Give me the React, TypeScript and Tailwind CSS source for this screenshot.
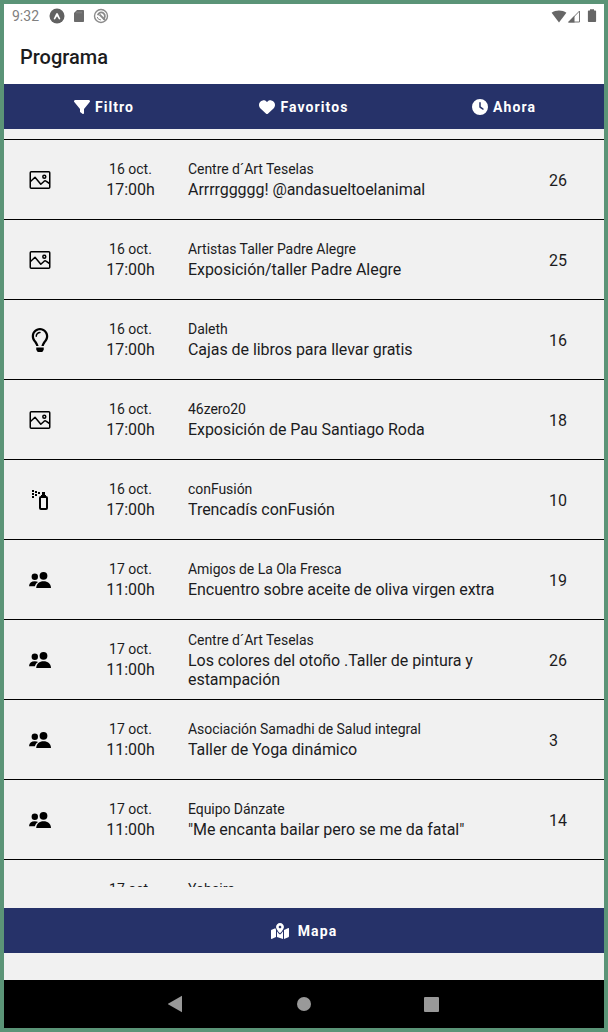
import clsx from 'clsx';
import type { ReactNode } from 'react';
import { FaMapMarkedAlt, FaRegLightbulb } from 'react-icons/fa';
import { FaClock, FaFilter, FaHeart } from 'react-icons/fa6';

type Category = 'exhibition' | 'idea' | 'spray' | 'people';

type ProgramEvent = {
  category: Category;
  date: string;
  time: string;
  organizer: string;
  title: string;
  place: number;
};

const EVENTS: ProgramEvent[] = [
  {
    category: 'exhibition',
    date: '16 oct.',
    time: '17:00h',
    organizer: 'Centre d´Art Teselas',
    title: 'Arrrrggggg! @andasueltoelanimal',
    place: 26,
  },
  {
    category: 'exhibition',
    date: '16 oct.',
    time: '17:00h',
    organizer: 'Artistas Taller Padre Alegre',
    title: 'Exposición/taller Padre Alegre',
    place: 25,
  },
  {
    category: 'idea',
    date: '16 oct.',
    time: '17:00h',
    organizer: 'Daleth',
    title: 'Cajas de libros para llevar gratis',
    place: 16,
  },
  {
    category: 'exhibition',
    date: '16 oct.',
    time: '17:00h',
    organizer: '46zero20',
    title: 'Exposición de Pau Santiago Roda',
    place: 18,
  },
  {
    category: 'spray',
    date: '16 oct.',
    time: '17:00h',
    organizer: 'conFusión',
    title: 'Trencadís conFusión',
    place: 10,
  },
  {
    category: 'people',
    date: '17 oct.',
    time: '11:00h',
    organizer: 'Amigos de La Ola Fresca',
    title: 'Encuentro sobre aceite de oliva virgen extra',
    place: 19,
  },
  {
    category: 'people',
    date: '17 oct.',
    time: '11:00h',
    organizer: 'Centre d´Art Teselas',
    title: 'Los colores del otoño .Taller de pintura y estampación',
    place: 26,
  },
  {
    category: 'people',
    date: '17 oct.',
    time: '11:00h',
    organizer: 'Asociación Samadhi de Salud integral',
    title: 'Taller de Yoga dinámico',
    place: 3,
  },
  {
    category: 'people',
    date: '17 oct.',
    time: '11:00h',
    organizer: 'Equipo Dánzate',
    title: '"Me encanta bailar pero se me da fatal"',
    place: 14,
  },
];

function PictureIcon() {
  return (
    <svg
      viewBox="0 0 24 24"
      className="size-6"
      fill="none"
      stroke="currentColor"
      strokeWidth="1.5"
      strokeLinejoin="round"
    >
      <rect x="2.250" y="3.750" width="19.500" height="16.500" rx="1" />
      <path d="m2.500 13.500 4.500-4.300 5.800 7 3.400-3c.6-.5 1.200-.5 1.800 0l3.500 2.300" />
      <circle cx="16.300" cy="8.800" r="1.500" />
    </svg>
  );
}

function SprayIcon() {
  return (
    <svg viewBox="0 0 24 24" className="size-6" fill="currentColor">
      <path d="M10 4h2v2h-2V4M7 3h2v2H7V3M7 6h2v2H7V6M6 8v2H4V8h2M6 5v2H4V5h2M6 2v2H4V2h2M13 22a2 2 0 0 1-2-2V10a2 2 0 0 1 2-2V7h1V4h3v3h1v1a2 2 0 0 1 2 2v10a2 2 0 0 1-2 2h-5M13 10v10h5V10h-5Z" />
    </svg>
  );
}

function PeopleIcon() {
  return (
    <svg viewBox="0 0 24 24" className="size-6" fill="currentColor">
      <circle cx="6.800" cy="8.700" r="3.200" />
      <circle cx="15.500" cy="7.800" r="3.900" />
      <path d="M8.200 20c.2-4.300 3.200-6.700 7.400-6.700S22.800 15.700 23 20z" />
      <path d="M1 18.300c.2-3.300 2.400-5 5.800-5 1.300 0 2.400.3 3.300.8-1.600 1-2.700 2.400-3.200 4.200z" />
    </svg>
  );
}

const CATEGORY_ICONS: Record<Category, ReactNode> = {
  exhibition: <PictureIcon />,
  idea: <FaRegLightbulb size={24} />,
  spray: <SprayIcon />,
  people: <PeopleIcon />,
};

function StatusBar() {
  return (
    <div className="flex h-6 items-center justify-between pl-2 pr-[7px] text-[#6b6b6b]">
      <div className="flex items-center">
        <span className="w-[37px] text-sm leading-6 text-[#808080]">9:32</span>
        <svg viewBox="0 0 16 16" className="size-4">
          <circle cx="8" cy="8" r="7.500" fill="#616161" />
          <path
            d="M4.600 11 7.300 5.200h1.400L11.400 11l-1.300.5L8 8.200l-2.100 3.300z"
            fill="#fff"
          />
        </svg>
        <svg viewBox="0 0 12 14" className="ml-2 h-3.5 w-3">
          <path
            d="M4 1h6.200a.8.8 0 0 1 .8.800v10.400a.8.8 0 0 1-.8.800H1.800a.8.8 0 0 1-.8-.800V4z"
            fill="#6b6b6b"
          />
          <path d="M4 2.600v1.800M6 2.600v1.800M8 2.600v1.800" stroke="#8d8d8d" />
        </svg>
        <svg viewBox="0 0 16 16" className="ml-2 size-4" fill="none">
          <circle cx="8" cy="8" r="6.500" stroke="#8a8a8a" strokeWidth="1.400" />
          <path
            d="M4.800 7.200A3.600 3.600 0 1 1 10 11.200"
            stroke="#8a8a8a"
            strokeWidth="1.800"
          />
          <path d="m6.500 6.500 5.500 5.500" stroke="#8a8a8a" strokeWidth="1.800" />
          <path d="M4.200 9a4 4 0 0 0 3.800 3" stroke="#8a8a8a" />
        </svg>
      </div>
      <div className="flex items-center">
        <svg viewBox="0 0 16 14" className="h-3.5 w-4">
          <path d="M8 13.400.6 3.800C4.600.6 11.400.6 15.400 3.800z" fill="#666" />
        </svg>
        <svg viewBox="0 0 14 14" className="h-3.5 w-3.5" fill="none">
          <path d="M1.800 13 12.500 2v11z" stroke="#777" />
          <path d="M.8 13.500 7.500 6.800v6.700z" fill="#666" />
        </svg>
        <svg viewBox="0 0 10 14" className="ml-1.5 h-3.5 w-2.5">
          <path
            d="M3 .2h4v1.300h1.300a.8.8 0 0 1 .8.800v10a.8.8 0 0 1-.8.800H1.700a.8.8 0 0 1-.8-.800v-10a.8.8 0 0 1 .8-.800H3z"
            fill="#666"
          />
        </svg>
      </div>
    </div>
  );
}

type ActionProps = {
  icon: ReactNode;
  label: string;
  className?: string;
};

function Action({ icon, label, className }: ActionProps) {
  return (
    <button
      type="button"
      className={clsx(
        'flex h-[45px] flex-1 items-center justify-center text-sm font-bold tracking-[1.1px] text-white',
        className,
      )}
    >
      {icon}
      <span>{label}</span>
    </button>
  );
}

function EventRow({ event }: { event: ProgramEvent }) {
  return (
    <li className="flex h-20 shrink-0 items-center border-b border-black">
      <div className="flex w-[72px] justify-center text-black">
        {CATEGORY_ICONS[event.category]}
      </div>
      <div className="flex w-[109px] flex-col items-center gap-[3px]">
        <span className="text-sm leading-4">{event.date}</span>
        <span className="text-base leading-[19px]">{event.time}</span>
      </div>
      <div className="ml-[3px] flex w-[320px] flex-col gap-[3px] pt-px tracking-[-0.05px]">
        <span className="text-sm leading-4">{event.organizer}</span>
        <span className="text-base leading-[19px]">{event.title}</span>
      </div>
      <span className="ml-[41px] pt-0.5 text-base leading-[19px]">
        {event.place}
      </span>
    </li>
  );
}

export default function App() {
  return (
    <div className="flex h-[1032px] w-[608px] flex-col border-4 border-[#5b9477] bg-[#f1f1f1] font-[Roboto,sans-serif] text-[#1c1c1e]">
      <header className="h-20 shrink-0 bg-white">
        <StatusBar />
        <h1 className="pl-4 pt-[15px] text-xl font-medium leading-7">
          Programa
        </h1>
      </header>

      <nav className="flex shrink-0 bg-[#263269]">
        <Action
          icon={<FaFilter size={16} className="mr-[5px]" />}
          label="Filtro"
        />
        <Action
          icon={<FaHeart size={16} className="mr-[5px]" />}
          label="Favoritos"
        />
        <Action
          icon={<FaClock size={16} className="mr-[5px]" />}
          label="Ahora"
        />
      </nav>

      <ul className="mt-2.5 flex h-[748px] shrink-0 flex-col overflow-hidden border-t border-black">
        {EVENTS.map((event) => (
          <EventRow key={event.title} event={event} />
        ))}
        {/* only the top of the next row peeks in above the map button */}
        <li className="flex h-7 shrink-0 pt-[21px] text-sm leading-4">
          <span className="ml-[72px] w-[109px] text-center">17 oct.</span>
          <span className="ml-[3px]">Yohaira</span>
        </li>
      </ul>

      <div className="mt-[21px] flex shrink-0 bg-[#263269]">
        <Action
          icon={<FaMapMarkedAlt size={18} className="mr-[9px]" />}
          label="Mapa"
        />
      </div>

      <div className="mt-auto flex h-12 shrink-0 items-center justify-center gap-[113px] bg-black pr-0.5">
        <svg viewBox="0 0 16 18" className="h-[18px] w-4" fill="#999">
          <path d="M-.5 9 14 .8v16.400z" />
        </svg>
        <div className="size-3.5 rounded-full bg-[#999]" />
        <div className="size-[15px] rounded-[1px] bg-[#999]" />
      </div>
    </div>
  );
}
